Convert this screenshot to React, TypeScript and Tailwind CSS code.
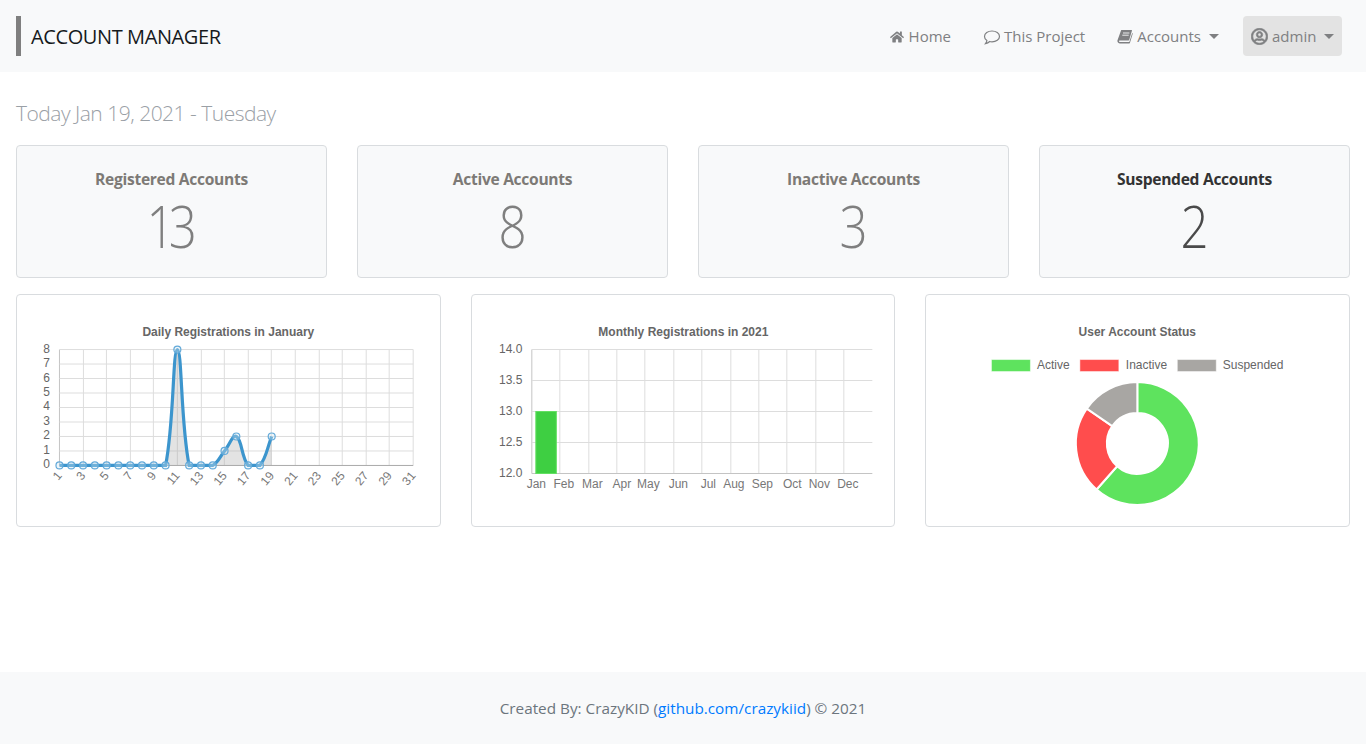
import { FaHome, FaRegUserCircle } from 'react-icons/fa'

const stats = [
  { label: 'Registered Accounts', value: 13, labelClass: 'text-[#7d7a76]', valueClass: 'text-[#7f7f7f]' },
  { label: 'Active Accounts', value: 8, labelClass: 'text-[#7d7a76]', valueClass: 'text-[#7f7f7f]' },
  { label: 'Inactive Accounts', value: 3, labelClass: 'text-[#7d7a76]', valueClass: 'text-[#7f7f7f]' },
  { label: 'Suspended Accounts', value: 2, labelClass: 'text-[#333333]', valueClass: 'text-[#4a4a4a]' },
]

const axisFont = { fontFamily: '"Liberation Sans", Arial, sans-serif' }
const grid = '#dddddd'

function ChartTitle({ x, children }: { x: number; children: string }) {
  return (
    <text x={x} y={336} textAnchor="middle" fontSize={12} fontWeight={700} fill="#666666" style={axisFont}>
      {children}
    </text>
  )
}

// same spline chart.js draws with tension 0.4, control points capped to the plot
function splinePath(pts: [number, number][], top: number, bottom: number) {
  const clamp = (v: number) => Math.min(bottom, Math.max(top, v))
  const t = 0.4
  let d = `M${pts[0][0]} ${pts[0][1]}`
  const ctrl = pts.map((p, i) => {
    const a = pts[Math.max(i - 1, 0)]
    const b = pts[Math.min(i + 1, pts.length - 1)]
    const d01 = Math.hypot(p[0] - a[0], p[1] - a[1])
    const d12 = Math.hypot(b[0] - p[0], b[1] - p[1])
    const s = d01 + d12 || 1
    return {
      px: p[0] - (t * d01 * (b[0] - a[0])) / s,
      py: clamp(p[1] - (t * d01 * (b[1] - a[1])) / s),
      nx: p[0] + (t * d12 * (b[0] - a[0])) / s,
      ny: clamp(p[1] + (t * d12 * (b[1] - a[1])) / s),
    }
  })
  for (let i = 1; i < pts.length; i++) {
    d += `C${ctrl[i - 1].nx} ${ctrl[i - 1].ny} ${ctrl[i].px} ${ctrl[i].py} ${pts[i][0]} ${pts[i][1]}`
  }
  return d
}

function DailyChart() {
  const left = 59.5
  const right = 413.5
  const top = 349.5
  const bottom = 465.5
  const stepX = (right - left) / 30
  const stepY = (bottom - top) / 8
  const daily = [0, 0, 0, 0, 0, 0, 0, 0, 0, 0, 8, 0, 0, 0, 1, 2, 0, 0, 2]
  const pts = daily.map((v, i) => [left + i * stepX, bottom - v * stepY] as [number, number])
  const line = splinePath(pts, top, bottom)
  const last = pts[pts.length - 1]

  return (
    <svg viewBox="17 295 423 231" className="block h-[231px] w-full">
      <ChartTitle x={228.5}>Daily Registrations in January</ChartTitle>
      {Array.from({ length: 16 }, (_, i) => {
        const x = Math.floor(left + i * 2 * stepX) + 0.5
        return <line key={i} x1={x} x2={x} y1={top} y2={bottom} stroke={i === 0 ? '#c4c4c4' : grid} />
      })}
      {Array.from({ length: 9 }, (_, i) => (
        <g key={i}>
          <line x1={left} x2={right} y1={top + i * stepY} y2={top + i * stepY} stroke={i === 8 ? '#aaaaaa' : grid} />
          <text x={50} y={top + i * stepY + 3} textAnchor="end" fontSize={12} fill="#666666" style={axisFont}>
            {8 - i}
          </text>
        </g>
      ))}
      {Array.from({ length: 16 }, (_, i) => {
        const x = left + i * 2 * stepX + 3
        return (
          <text key={i} transform={`translate(${x} 476) rotate(-50)`} textAnchor="end" fontSize={12} fill="#777777" style={axisFont}>
            {i * 2 + 1}
          </text>
        )
      })}
      <path d={`${line}L${last[0]} ${bottom}L${left} ${bottom}Z`} fill="#a8a8a8" fillOpacity={0.32} />
      <path d={line} fill="none" stroke="#3c95cd" strokeWidth={3.2} />
      {pts.map((p, i) => (
        <circle key={i} cx={p[0]} cy={p[1]} r={3.5} fill="#d0e4f2" fillOpacity={0.35} stroke="#62a9d9" strokeWidth={1.2} />
      ))}
    </svg>
  )
}

function MonthlyChart() {
  const left = 531.5
  const right = 872
  const top = 349.5
  const bottom = 473.5
  const gridX = [531.5, 559.5, 588.5, 616.5, 644.5, 673.5, 701.5, 730.5, 758.5, 786.5, 815.5, 843.5]
  const months: [string, number][] = [
    ['Jan', 536], ['Feb', 563.5], ['Mar', 592], ['Apr', 621.5], ['May', 648], ['Jun', 678],
    ['Jul', 708], ['Aug', 733.5], ['Sep', 762], ['Oct', 792], ['Nov', 819], ['Dec', 847.5],
  ]

  return (
    <svg viewBox="472 295 422 231" className="block h-[231px] w-full">
      <ChartTitle x={683}>Monthly Registrations in 2021</ChartTitle>
      {gridX.map((x, i) => (
        <line key={x} x1={x} x2={x} y1={top} y2={bottom} stroke={i === 0 ? '#c4c4c4' : grid} />
      ))}
      {['14.0', '13.5', '13.0', '12.5', '12.0'].map((label, i) => (
        <g key={label}>
          <line x1={left} x2={right} y1={top + i * 31} y2={top + i * 31} stroke={i === 4 ? '#c4c4c4' : grid} />
          <text x={522} y={top + i * 31 + 3} textAnchor="end" fontSize={12} fill="#666666" style={axisFont}>
            {label}
          </text>
        </g>
      ))}
      <rect x={535.5} y={411.5} width={20.5} height={62} fill="#3ecf42" stroke="#62e062" />
      {months.map(([m, x]) => (
        <text key={m} x={x} y={487.5} textAnchor="middle" fontSize={12} fill="#777777" style={axisFont}>
          {m}
        </text>
      ))}
    </svg>
  )
}

function donutSlice(cx: number, cy: number, R: number, r: number, from: number, to: number) {
  const pt = (rad: number, a: number) => `${cx + rad * Math.sin(a)} ${cy - rad * Math.cos(a)}`
  const large = to - from > Math.PI ? 1 : 0
  return `M${pt(R, from)}A${R} ${R} 0 ${large} 1 ${pt(R, to)}L${pt(r, to)}A${r} ${r} 0 ${large} 0 ${pt(r, from)}Z`
}

function StatusChart() {
  const slices = [
    { name: 'Active', value: 8, color: '#5ee35e', box: 991, text: 1037 },
    { name: 'Inactive', value: 3, color: '#ff4d4d', box: 1079.5, text: 1126 },
    { name: 'Suspended', value: 2, color: '#a8a6a3', box: 1177, text: 1223 },
  ]
  let angle = 0

  return (
    <svg viewBox="926 295 423 231" className="block h-[231px] w-full">
      <ChartTitle x={1137.5}>User Account Status</ChartTitle>
      {slices.map((s) => (
        <g key={s.name}>
          <rect x={s.box + 0.5} y={359.5} width={39} height={12} fill={s.color} stroke="#ffffff" strokeOpacity={0.5} />
          <text x={s.text} y={369} fontSize={12} fill="#666666" style={axisFont}>
            {s.name}
          </text>
        </g>
      ))}
      {slices.map((s) => {
        const from = angle
        angle += (s.value / 13) * Math.PI * 2
        return <path key={s.name} d={donutSlice(1137.5, 443.5, 61.5, 30.5, from, angle)} fill={s.color} stroke="#ffffff" strokeWidth={2} />
      })}
    </svg>
  )
}

function Caret() {
  return <span className="ml-1 inline-block h-0 w-0 border-x-[5px] border-t-[5px] border-x-transparent border-t-current" />
}

function CommentIcon() {
  return (
    <svg viewBox="0 0 18 16" className="h-4 w-[18px]" fill="none" stroke="currentColor" strokeWidth={1.2}>
      <path d="M9 2c4.1 0 7.5 2.4 7.5 5.4S13.1 12.8 9 12.8c-.8 0-1.6-.1-2.3-.3C5.5 13.6 4 14.3 2.5 14.6c.8-1 1.3-2 1.4-3.1C2.4 10.5 1.5 9 1.5 7.4 1.5 4.4 4.9 2 9 2z" />
    </svg>
  )
}

function BookIcon() {
  return (
    <svg viewBox="0 0 16 15" className="h-[15px] w-4" fill="currentColor">
      <path d="M4.2 1H14.6c.3 0 .5.3.4.6L12.2 11c-.1.3-.3.4-.6.4H3c-.8 0-1.1.5-.9 1s.5.6 1 .6h9.2l2.9-9 .6.4-2.9 9.6c-.1.3-.3.4-.6.4H3c-1.4 0-2.5-1-2.6-2.2 0-.4 0-.7.2-1.1z" />
      <path d="M6 4h6.4M5.3 6.2h6.4" stroke="#f8f9fa" strokeWidth={0.9} />
    </svg>
  )
}

export default function App() {
  return (
    <div className="flex min-h-screen flex-col bg-white font-['Open_Sans','Liberation_Sans',sans-serif] text-[#212529]">
      <header className="flex h-[72px] items-center justify-between bg-[#f8f9fa] pl-4 pr-6">
        <div className="flex h-10 items-center border-l-[5px] border-[#7f7f7f] pl-[10px] pt-0.5 text-[20px] tracking-[-0.4px] text-[#16191c]">
          ACCOUNT MANAGER
        </div>
        <nav className="flex items-center text-[15px] text-[#7f8082]">
          <a className="flex items-center gap-[5px] pt-px">
            <FaHome className="text-[14px]" /> Home
          </a>
          <a className="ml-8 flex items-center gap-[3px] pt-px">
            <CommentIcon /> This Project
          </a>
          <a className="ml-8 flex items-center gap-[4px] pt-px">
            <BookIcon /> Accounts
            <Caret />
          </a>
          <a className="ml-6 flex h-10 w-[99px] items-center gap-[4px] rounded bg-[#e3e3e3] pl-2 pt-px">
            <FaRegUserCircle className="stroke-current stroke-[20] text-[17px]" /> admin
            <Caret />
          </a>
        </nav>
      </header>

      <main className="flex-1 px-4">
        <h1 className="mt-[26px] text-[21px] font-light leading-[30px] tracking-[-0.5px] text-[#9aa0a6]">Today Jan 19, 2021 - Tuesday</h1>

        <section className="mt-[17px] grid grid-cols-4 gap-[30px]">
          {stats.map((s) => (
            <div key={s.label} className="flex h-[133px] flex-col items-center rounded border border-[#d9dcdf] bg-[#f8f9fa] pt-[21px]">
              <div className={`text-[15.6px] font-bold leading-6 tracking-[-0.3px] ${s.labelClass}`}>{s.label}</div>
              <div className={`scale-x-[0.85] pr-[7px] text-[58px] font-light leading-[69px] tracking-[-7px] ${s.valueClass}`}>{s.value}</div>
            </div>
          ))}
        </section>

        <section className="mt-4 grid grid-cols-3 gap-[30px]">
          <div className="rounded border border-[#d9dcdf]">
            <DailyChart />
          </div>
          <div className="rounded border border-[#d9dcdf]">
            <MonthlyChart />
          </div>
          <div className="rounded border border-[#d9dcdf]">
            <StatusChart />
          </div>
        </section>
      </main>

      <footer className="flex h-[72px] items-center justify-center bg-[#f8f9fa] pt-px text-[15.3px] text-[#6c757d]">
        <span>
          Created By: CrazyKID (<a className="text-[#007bff]">github.com/crazykiid</a>) © 2021
        </span>
      </footer>
    </div>
  )
}
